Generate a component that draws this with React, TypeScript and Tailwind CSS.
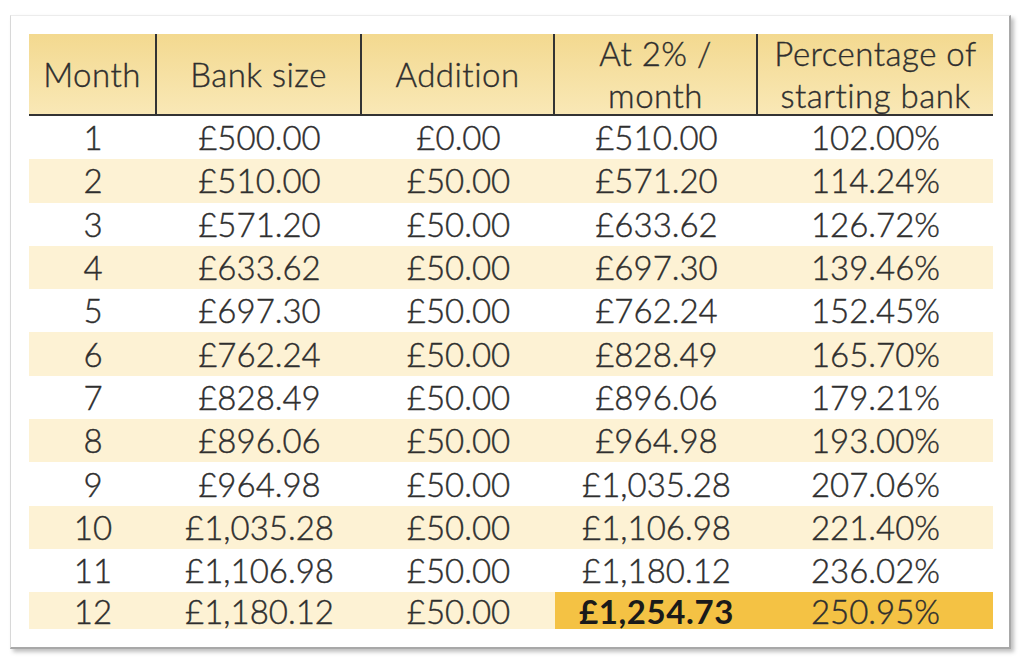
const rows = [
  ["1", "£500.00", "£0.00", "£510.00", "102.00%"],
  ["2", "£510.00", "£50.00", "£571.20", "114.24%"],
  ["3", "£571.20", "£50.00", "£633.62", "126.72%"],
  ["4", "£633.62", "£50.00", "£697.30", "139.46%"],
  ["5", "£697.30", "£50.00", "£762.24", "152.45%"],
  ["6", "£762.24", "£50.00", "£828.49", "165.70%"],
  ["7", "£828.49", "£50.00", "£896.06", "179.21%"],
  ["8", "£896.06", "£50.00", "£964.98", "193.00%"],
  ["9", "£964.98", "£50.00", "£1,035.28", "207.06%"],
  ["10", "£1,035.28", "£50.00", "£1,106.98", "221.40%"],
  ["11", "£1,106.98", "£50.00", "£1,180.12", "236.02%"],
  ["12", "£1,180.12", "£50.00", "£1,254.73", "250.95%"],
];

const headers = ["Month", "Bank size", "Addition", "At 2% / month", "Percentage of starting bank"];
const widths = ["w-[128px]", "w-[205px]", "w-[193px]", "w-[203px]", "w-[235px]"];

export default function App() {
  return (
    <div className="w-[1024px] h-[661px] bg-white pt-[15px] pl-[10px] font-['Lato',sans-serif] font-light text-[#2e2e2e] [-webkit-text-stroke:0.4px_#2e2e2e]">
      <div className="w-[1001px] h-[634px] bg-white border-l border-t border-l-[#d8d8d8] border-t-[#ececec] border-r-2 border-b-2 border-r-[#a8a8a8] border-b-[#a8a8a8] shadow-[3px_3px_4px_rgba(0,0,0,0.25)] pt-[18px] pl-[18px]">
        <div className="w-[964px] h-[596px] flex flex-col overflow-hidden">
          {/* header */}
          <div className="flex shrink-0 h-[82px] bg-gradient-to-b from-[#f3d98f] to-[#f9e8b6] border-b-2 border-[#333]">
            {headers.map((h, i) => (
              <div
                key={h}
                className={`${widths[i]} flex items-center justify-center text-center text-[33px] tracking-[0.5px] leading-[42px] ${
                  i < 4 ? "border-r-2 border-[#333]" : ""
                } ${i === 3 ? "px-10" : ""}`}
              >
                {h}
              </div>
            ))}
          </div>
          {/* body */}
          {rows.map((r, ri) => (
            <div
              key={r[0]}
              className={`flex shrink-0 ${ri === 11 ? "h-[37px]" : "h-[43.3px]"} ${
                ri % 2 === 1 ? "bg-[#fdf2d4]" : "bg-white"
              }`}
            >
              {r.map((c, ci) => (
                <div
                  key={ci}
                  className={`${widths[ci]} h-full flex justify-center text-[33px] leading-none ${
                    ri === 11 ? "items-start pt-[3px]" : "items-center"
                  } ${ri === 11 && ci >= 3 ? "bg-[#f4c244]" : ""} ${
                    ri === 11 && ci === 3
                      ? "font-bold text-[#1a1a1a] tracking-[0.6px] [-webkit-text-stroke:0px]"
                      : ""
                  }`}
                >
                  {c}
                </div>
              ))}
            </div>
          ))}
        </div>
      </div>
    </div>
  );
}
